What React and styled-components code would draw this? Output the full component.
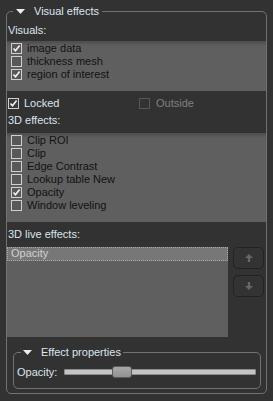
import React from 'react';
import styled, { createGlobalStyle } from 'styled-components';

const Global = createGlobalStyle`
  html, body { margin: 0; padding: 0; background: #323232; }
  body { font-family: "Liberation Sans", Arial, sans-serif; font-size: 11px; }
  #root { width: 273px; height: 401px; overflow: hidden; }
`;

const Page = styled.div`
  width: 273px;
  height: 401px;
  box-sizing: border-box;
  padding: 4px 6px 0 6px;
  background: #323232;
`;

const Group = styled.fieldset`
  margin: ${p => p.$inner ? '8px 5px 0 6px' : '0'};
  padding: 0 0 ${p => p.$inner ? '9px' : '4px'} 0;
  border: 1px solid #727272;
  border-radius: 5px;
  min-width: 0;
`;

const Legend = styled.legend`
  display: flex;
  align-items: center;
  gap: 9px;
  height: 14px;
  line-height: 14px;
  padding: 0 ${p => p.$inner ? '2px' : '3px'};
  margin-left: ${p => p.$inner ? '7px' : '6px'};
  color: #dce5ee;
  font-size: 11px;
`;

const Body = styled.div`
  display: flex;
  flex-direction: column;
  padding-top: 5px;
`;

const Label = styled.div`
  height: 14px;
  line-height: 14px;
  padding-left: 1px;
  color: #dce5ee;
  margin-top: ${p => p.$mt || 0}px;
`;

const List = styled.div`
  height: ${p => p.$h}px;
  margin-top: ${p => p.$mt || 0}px;
  box-sizing: border-box;
  padding: 1px 0 0 0;
  background: linear-gradient(#4c4c4c, #5f5f5f 5px, #5f5f5f);
  display: flex;
  flex-direction: column;
`;

const Item = styled.div`
  height: 13px;
  display: flex;
  align-items: center;
  gap: 5px;
  padding-left: 4px;
  color: #121212;
  line-height: 13px;
  white-space: nowrap;
`;

const Box = styled.span`
  width: 11px;
  height: 11px;
  box-sizing: border-box;
  border: 1px solid ${p => p.$disabled ? '#575757' : '#cfcfcf'};
  background: ${p => p.$disabled ? 'transparent' : p.$dark ? '#3a3a3a' : '#585858'};
  display: inline-flex;
  align-items: center;
  justify-content: center;
  flex: none;
`;

const Check = ({ checked, disabled, dark }) => (
  <Box $disabled={disabled} $dark={dark}>
    {checked && (
      <svg width="9" height="9" viewBox="0 0 9 9">
        <path d="M1.5 4.5 L3.5 6.8 L7.6 1.6" fill="none" stroke="#f2f2f2" strokeWidth="1.6" />
      </svg>
    )}
  </Box>
);

const LockRow = styled.div`
  display: grid;
  grid-template-columns: 132px 1fr;
  height: 14px;
  margin-top: 5px;
`;

const Toggle = styled.div`
  display: flex;
  align-items: center;
  gap: ${p => p.$gap || 5}px;
  padding-left: ${p => p.$pl || 0}px;
  color: ${p => p.$disabled ? '#808080' : '#dce5ee'};
  line-height: 14px;
`;

const LiveArea = styled.div`
  display: flex;
  gap: 5px;
  margin-top: 6px;
  height: 90px;
  padding-right: 2px;
`;

const LiveList = styled.div`
  flex: 1;
  background: #5f5f5f;
  display: flex;
  flex-direction: column;
`;

const LiveItem = styled.div`
  height: 12px;
  line-height: 11px;
  padding-left: 3px;
  background: #777777;
  border: 1px dotted #a8a8a8;
  color: #d0d0d0;
`;

const Buttons = styled.div`
  display: flex;
  flex-direction: column;
  gap: 6px;
`;

const MoveButton = styled.div`
  width: 31px;
  height: 22px;
  box-sizing: border-box;
  border: 1px solid #232323;
  border-radius: 5px;
  background: #333333;
  display: flex;
  align-items: center;
  justify-content: center;
`;

const PropRow = styled.div`
  display: flex;
  align-items: center;
  gap: 7px;
  height: 14px;
  padding: 6px 4px 0 3px;
  color: #dce5ee;
`;

const Slider = styled.div`
  position: relative;
  flex: 1;
  height: 12px;
  display: flex;
  align-items: center;
`;

const Groove = styled.div`
  width: 100%;
  height: 6px;
  box-sizing: border-box;
  background: #c4c4c4;
  border: 1px solid #8c8c8c;
  border-radius: 1px;
`;

const Handle = styled.div`
  position: absolute;
  top: 0;
  width: 20px;
  height: 12px;
  box-sizing: border-box;
  background: linear-gradient(#a8a8a8, #929292);
  border: 1px solid #5c5c5c;
  border-radius: 3px;
`;

const Arrow = () => (
  <svg width="9" height="5" viewBox="0 0 9 5">
    <path d="M0 0 H9 L4.5 5 Z" fill="#ececec" />
  </svg>
);

const UpIcon = ({ down }) => (
  <svg width="8" height="8" viewBox="0 0 8 8" style={down ? { transform: 'rotate(180deg)' } : undefined}>
    <path d="M4 0 L8 4 H5.2 V8 H2.8 V4 H0 Z" fill="#666666" />
  </svg>
);

const visuals = [
  ['image data', true],
  ['thickness mesh', false],
  ['region of interest', true],
];

const effects = [
  ['Clip ROI', false],
  ['Clip', false],
  ['Edge Contrast', false],
  ['Lookup table New', false],
  ['Opacity', true],
  ['Window leveling', false],
];

export default function App() {
  const value = 0.28;
  return (
    <Page>
      <Global />
      <Group>
        <Legend><Arrow />Visual effects</Legend>
        <Body>
          <Label>Visuals:</Label>
          <List $h={50} $mt={4}>
            {visuals.map(([t, c]) => (
              <Item key={t}><Check checked={c} />{t}</Item>
            ))}
          </List>
          <LockRow>
            <Toggle $pl={1}><Check checked dark />Locked</Toggle>
            <Toggle $disabled $gap={6}><Check disabled />Outside</Toggle>
          </LockRow>
          <Label $mt={3}>3D effects:</Label>
          <List $h={89} $mt={6}>
            {effects.map(([t, c]) => (
              <Item key={t}><Check checked={c} />{t}</Item>
            ))}
          </List>
          <Label $mt={5}>3D live effects:</Label>
          <LiveArea>
            <LiveList>
              <LiveItem>Opacity</LiveItem>
            </LiveList>
            <Buttons>
              <MoveButton><UpIcon /></MoveButton>
              <MoveButton><UpIcon down /></MoveButton>
            </Buttons>
          </LiveArea>
          <Group $inner>
            <Legend $inner><Arrow />Effect properties</Legend>
            <PropRow>
              Opacity:
              <Slider>
                <Groove />
                <Handle style={{ left: `calc(${value} * (100% - 20px))` }} />
              </Slider>
            </PropRow>
          </Group>
        </Body>
      </Group>
    </Page>
  );
}
